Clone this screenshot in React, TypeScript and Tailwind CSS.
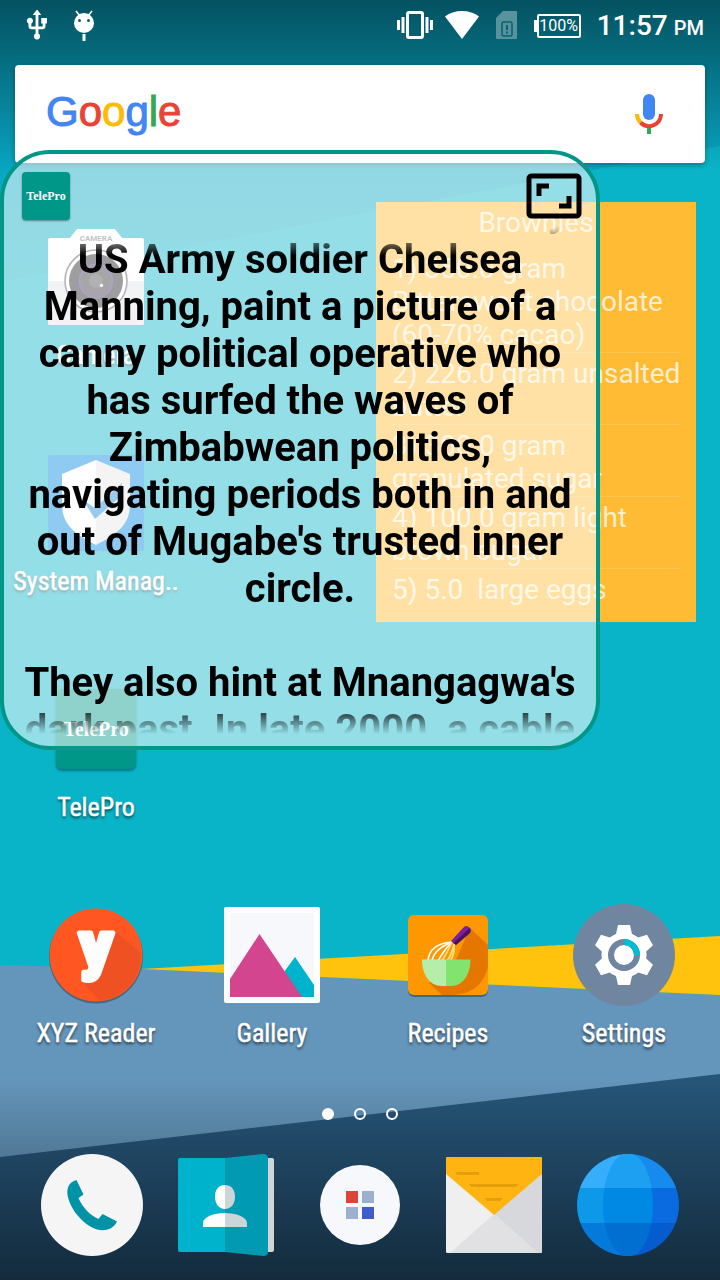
import type { ReactNode } from 'react';
import { MdAspectRatio, MdUsb } from 'react-icons/md';

function Wallpaper() {
  return (
    <svg className="absolute inset-0 h-full w-full" viewBox="0 0 720 1280" preserveAspectRatio="none" aria-hidden="true">
      <defs>
        <linearGradient id="topShade" x1="0" y1="0" x2="0" y2="1">
          <stop offset="0" stopColor="#000" stopOpacity="0.5" />
          <stop offset="0.3" stopColor="#000" stopOpacity="0.36" />
          <stop offset="1" stopColor="#000" stopOpacity="0" />
        </linearGradient>
        <linearGradient id="bottomShade" x1="0" y1="0" x2="0" y2="1">
          <stop offset="0" stopColor="#000" stopOpacity="0" />
          <stop offset="1" stopColor="#000" stopOpacity="0.5" />
        </linearGradient>
        <linearGradient id="ray" x1="0" y1="0" x2="0" y2="1">
          <stop offset="0.5" stopColor="#08a4c1" />
          <stop offset="1" stopColor="#0ab0c7" />
        </linearGradient>
      </defs>
      <rect width="720" height="1280" fill="#0ab4c8" />
      <polygon points="0,0 720,0 720,146 0,282" fill="url(#ray)" />
      <polygon points="0,965 141,969 720,995 720,1280 0,1280" fill="#6495ba" />
      <polygon points="141,969 720,936 720,995" fill="#ffc20d" />
      <polygon points="0,1157 720,1074 720,1280 0,1280" fill="#265578" />
      <rect width="720" height="172" fill="url(#topShade)" />
      <rect y="1080" width="720" height="200" fill="url(#bottomShade)" />
    </svg>
  );
}

function StatusBar() {
  return (
    <header className="relative flex h-[50px] items-center justify-between pl-5 pr-4 text-white">
      <div className="flex items-center gap-3">
        <MdUsb className="size-[34px]" aria-label="USB connected" />
        <svg className="size-9" viewBox="0 0 36 36" aria-label="Debugging">
          <circle cx="18" cy="16" r="10" fill="#fff" />
          <path d="M10 4l4 5M26 4l-4 5" stroke="#fff" strokeWidth="1.6" />
          <circle cx="13.500" cy="13.500" r="1.500" fill="#05606e" />
          <circle cx="22.500" cy="13.500" r="1.500" fill="#05606e" />
          <rect x="16.500" y="27" width="3" height="7" fill="#fff" />
        </svg>
      </div>
      <div className="flex items-center">
        <svg className="h-7 w-9" viewBox="0 0 36 28" fill="#fff" aria-label="Vibrate">
          <rect x="10.500" y="1.500" width="15" height="25" rx="1.500" fill="none" stroke="#fff" strokeWidth="3" />
          <path d="M0 9h3v10H0zM4.500 6h3v16h-3zM28.500 6h3v16h-3zM33 9h3v10h-3z" />
        </svg>
        <svg className="ml-3 h-7 w-[34px]" viewBox="0 0 34 28" aria-label="Wi-Fi">
          <path d="M0 5.500Q7 0 17 0t17 5.500L17 28z" fill="#fff" />
        </svg>
        <svg className="ml-[17px] h-7 w-[21px]" viewBox="0 0 21 28" aria-label="No SIM">
          <path d="M7 0h13q1 0 1 1v26q0 1-1 1H1q-1 0-1-1V7z" fill="#58939d" />
          <rect x="6" y="11" width="10" height="14" rx="1.500" fill="none" stroke="#05606e" strokeWidth="1.500" />
          <path d="M10 14h2v5h-2zM10 20.500h2v2h-2z" fill="#05606e" />
        </svg>
        <div className="ml-[17px] flex items-center pt-px">
          <span className="h-3 w-[3px] bg-white" />
          <span className="flex h-6 w-11 items-center justify-center rounded-xs border-2 border-white text-[16px] leading-5">100%</span>
        </div>
        <time className="ml-4 flex items-baseline gap-[6px] pt-1 text-[28px] font-medium leading-8">
          11:57 <span className="text-[20px]">PM</span>
        </time>
      </div>
    </header>
  );
}

function SearchBar() {
  return (
    <div className="relative mx-[15px] mt-[15px] flex h-[98px] items-center justify-between rounded-sm bg-white pl-[31px] pr-10 shadow-[0_2px_5px_rgba(0,0,0,0.3)]">
      <a href="#search" aria-label="Google" className="pb-1 font-['Liberation_Sans',sans-serif] text-[42px] leading-[50px] [-webkit-text-stroke:1px]">
        <span className="text-[#4285f4]">G</span>
        <span className="text-[#ea4335]">o</span>
        <span className="text-[#fbbc05]">o</span>
        <span className="text-[#4285f4]">g</span>
        <span className="text-[#34a853]">l</span>
        <span className="text-[#ea4335]">e</span>
      </a>
      <button aria-label="Voice search">
        <svg className="h-10 w-8" viewBox="0 0 32 40" fill="none" strokeWidth="4">
          <rect x="10" y="0" width="12" height="26" rx="6" fill="#4285f4" />
          <path d="M4 20a12 12 0 0 0 3.500 8.500" stroke="#fbbc05" />
          <path d="M7.500 28.500A12 12 0 0 0 28 20" stroke="#ea4335" />
          <path d="M16 34v6" stroke="#34a853" />
        </svg>
      </button>
    </div>
  );
}

function AppIcon({ label, area, children }: { label: string; area: string; children: ReactNode }) {
  return (
    <a href={'#' + label.toLowerCase().replace(/\W+/g, '-')} className={'flex flex-col items-center pt-[38px] ' + area}>
      <span className="flex h-[106px] items-center justify-center">{children}</span>
      <span className="mt-[9px] font-['Roboto_Condensed','Liberation_Sans_Narrow',Roboto,sans-serif] text-[26px] leading-8 text-white [-webkit-text-stroke:0.5px] [text-shadow:0_2px_3px_rgba(0,0,0,0.7)]">
        {label}
      </span>
    </a>
  );
}

function CameraArt() {
  return (
    <svg className="size-24" viewBox="0 0 96 96" aria-hidden="true">
      <path d="M2 9h20l7-9h38l7 9h20q2 0 2 2v83q0 2-2 2H2q-2 0-2-2V11q0-2 2-2z" fill="#fff" />
      <path d="M0 52h96v42q0 2-2 2H2q-2 0-2-2z" fill="#dfe4e9" />
      <circle cx="48" cy="52" r="31" fill="#fff" stroke="#555" strokeWidth="1.600" />
      <circle cx="48" cy="52" r="27" fill="#222229" />
      <circle cx="48" cy="52" r="16.500" fill="#34343c" stroke="#4c2a8e" strokeWidth="1.500" />
      <circle cx="48" cy="52" r="7" fill="#4d4d55" />
      <circle cx="53.500" cy="56.500" r="1.700" fill="#fff" />
      <text x="48" y="12" textAnchor="middle" fontSize="8" fontFamily="Roboto, sans-serif" fontWeight="700" fill="#777">CAMERA</text>
    </svg>
  );
}

function ShieldArt() {
  return (
    <svg className="size-24" viewBox="0 0 96 96" aria-hidden="true">
      <rect width="96" height="96" rx="2" fill="#0086e1" />
      <path d="M48 5L14 19v30c0 21 13 30 34 41z" fill="#fff" />
      <path d="M48 5l34 14v30c0 21-13 30-34 41z" fill="#e5e5e5" />
      <path d="M35 45l12 8 27-25-1 13-26 23z" fill="#1687d8" />
    </svg>
  );
}

function TeleProArt() {
  return (
    <span className="flex size-20 items-center justify-center rounded-md bg-[#009688] font-['Liberation_Serif',serif] text-[20px] font-bold text-white shadow-[0_2px_3px_rgba(0,0,0,0.35)]">
      TelePro
    </span>
  );
}

function ReaderArt() {
  return (
    <svg className="size-[100px]" viewBox="0 0 100 100" aria-hidden="true">
      <circle cx="50" cy="51.500" r="47" fill="#000" opacity="0.3" />
      <circle cx="50" cy="50" r="46.500" fill="#ff5622" />
      <path d="M70 27l25 21A46.500 46.500 0 0 1 54 96L35 76z" fill="#ef5122" />
      <text x="50" y="62" textAnchor="middle" fontSize="64" fontFamily="Roboto, sans-serif" fontWeight="900" fill="#fff" stroke="#fff" strokeWidth="5" strokeLinejoin="round">y</text>
    </svg>
  );
}

function GalleryArt() {
  return (
    <svg className="size-24" viewBox="0 0 96 96" aria-hidden="true">
      <rect width="96" height="96" rx="2" fill="#fff" />
      <rect x="6" y="6" width="84" height="84" fill="#f6f8fb" />
      <path d="M71 50l19 28v12H60V65z" fill="#00b3cc" />
      <path d="M35.500 27L78 90H6V72z" fill="#d4458f" />
    </svg>
  );
}

function RecipesArt() {
  return (
    <svg className="size-[86px]" viewBox="0 0 86 86" aria-hidden="true">
      <rect x="3" y="4" width="80" height="81" rx="6" fill="#000" opacity="0.3" />
      <rect x="3" y="3" width="80" height="80" rx="6" fill="#ff9800" />
      <path d="M65 16l18 17v22c-4 16-15 28-37 28h-9L24 71 50 50z" fill="#e57600" />
      <g fill="none" strokeWidth="1.700">
        <path d="M47 30Q24 32 23 49M47 30Q29 37 27 49M47 30Q39 38 33 49" stroke="#fff" />
        <path d="M47 30Q42 41 37 49M49 32Q47 42 42 49M49 32Q50 42 45 49" stroke="#ffe082" />
      </g>
      <path d="M46 29L58 16q3-4 7 0 1 2-1 4L51 33z" fill="#7b1fa2" />
      <path d="M48.500 31L65 16q2 3-1 6L51 33z" fill="#4a1060" />
      <path d="M17 47.500h24V74h-4C24 74 17 62 17 47.500z" fill="#b5eeab" />
      <path d="M41 47.500h24.500C65.500 62 58 74 46 74h-5z" fill="#83e36f" />
    </svg>
  );
}

function SettingsArt() {
  return (
    <svg className="size-[102px]" viewBox="-51 -51 102 102" aria-hidden="true">
      <circle r="51" fill="#7086a0" />
      <g fill="#fff">
        {[0, 60, 120, 180, 240, 300].map((a) => (
          <path key={a} d="M-6-30H6L8-21 12-16H-12L-8-21z" transform={`rotate(${a})`} />
        ))}
        <circle r="22.500" />
      </g>
      <circle r="13" fill="none" stroke="#7086a0" strokeWidth="6" />
      <path d="M0-13A13 13 0 0 1 13 0" fill="none" stroke="#00bcd4" strokeWidth="6" />
    </svg>
  );
}

const ingredients = [
  ['1) 350.0 gram', 'Bittersweet chocolate', '(60-70% cacao)'],
  ['2) 226.0 gram unsalted', 'butter'],
  ['3) 300.0 gram', 'granulated sugar'],
  ['4) 100.0 gram light', 'brown sugar'],
  ['5) 5.0  large eggs'],
];

function RecipeWidget() {
  return (
    <section className="col-span-2 col-start-3 row-span-2 row-start-1 m-4 overflow-hidden bg-[#ffbb33] px-4 pt-1 text-[28px] leading-[33px] text-white/75">
      <h2 className="text-center">Brownies</h2>
      <ul className="mt-[9px]">
        {ingredients.map((lines) => (
          <li key={lines[0]} className="border-b border-white/15 pb-px pt-1 last:border-0">
            {lines.map((line) => (
              <span key={line} className="block whitespace-pre">{line}</span>
            ))}
          </li>
        ))}
      </ul>
    </section>
  );
}

const story = [
  'US Army soldier Chelsea',
  'Manning, paint a picture of a',
  'canny political operative who',
  'has surfed the waves of',
  'Zimbabwean politics,',
  'navigating periods both in and',
  "out of Mugabe's trusted inner",
  'circle.',
  '\u00a0',
  "They also hint at Mnangagwa's",
  'dark past. In late 2000, a cable',
];

function Teleprompter() {
  return (
    <section className="absolute left-0 top-[150px] flex h-[600px] w-[600px] max-w-full flex-col rounded-[50px] border-4 border-[#009688] bg-white/56">
      <div className="flex items-center justify-between pl-[18px] pr-3 pt-3">
        <button className="size-12 rounded-sm bg-[#009688] font-['Liberation_Serif',serif] text-[12px] font-bold text-white shadow-[0_1px_2px_rgba(0,0,0,0.4)]">
          TelePro
        </button>
        <button aria-label="Resize">
          <MdAspectRatio className="size-[60px] text-black" />
        </button>
      </div>
      <div className="mb-3 min-h-0 flex-1 overflow-hidden [mask-image:linear-gradient(transparent,#000_30px,#000_calc(100%_-_30px),transparent)]">
        <div className="-mt-[37px] text-center text-[40px] font-bold leading-[47px] text-black">
          <p className="pr-7 text-right">y</p>
          {story.map((line) => (
            <p key={line} className="whitespace-nowrap">{line}</p>
          ))}
        </div>
      </div>
    </section>
  );
}

function Dock() {
  return (
    <nav className="relative grid h-[142px] grid-cols-5 items-center justify-items-center px-[25px] pb-2">
      <a href="#phone" aria-label="Phone">
        <svg className="size-[102px]" viewBox="0 0 102 102">
          <circle cx="51" cy="51" r="51" fill="#f5f5f5" />
          <path d="M35.500 26l7 14.500-5 3.500c3 8 12 18 20 21l4-5L76 67.500c-4 8-12 10-20 8C42 71 29 55 26.500 41c-1-8 2-13 9-15z" fill="#0092a6" />
        </svg>
      </a>
      <a href="#contacts" aria-label="Contacts">
        <svg className="h-[102px] w-24" viewBox="0 0 96 102">
          <rect x="70" y="4" width="26" height="94" rx="2" fill="#d4d4d4" />
          <path d="M2 4h45v94H2q-2 0-2-2V6q0-2 2-2z" fill="#00b3cc" />
          <path d="M47 4l38-4q5 0 5 4v94q0 4-5 4l-38-4z" fill="#009bb3" />
          <path d="M47 31c-7 0-10 5-10 12s4 12 10 12zM47 59c-11 0-22 4-22 10v4h22z" fill="#fff" />
          <path d="M47 31c7 0 10 5 10 12s-4 12-10 12zM47 59c11 0 22 4 22 10v4H47z" fill="#ccd5d8" />
        </svg>
      </a>
      <button aria-label="All apps" className="grid size-20 grid-cols-[12px_12px] place-content-center gap-1 rounded-full bg-[#f7f8fb]">
        <span className="size-3 bg-[#dc4538]" />
        <span className="size-3 bg-[#9cb0cd]" />
        <span className="size-3 bg-[#9cb0cd]" />
        <span className="size-3 bg-[#405bca]" />
      </button>
      <a href="#mail" aria-label="Mail">
        <svg className="size-24" viewBox="0 0 96 96">
          <rect width="96" height="96" rx="1.500" fill="#efefef" />
          <path d="M48 57l48-40v78q0 1-1 1h-3z" fill="#d7d8dc" />
          <path d="M48 57l44 39H4z" fill="#e1e1e3" />
          <path d="M1 0h94q1 0 1 1v16L48 58 0 17V1q0-1 1-1z" fill="#ffb411" />
          <path d="M9 15h24v3H11zM22.500 27h50L70 30H25.500zM38.500 41h18.500L54 44H41z" fill="#e59f0b" />
        </svg>
      </a>
      <a href="#browser" aria-label="Browser">
        <svg className="size-[102px]" viewBox="0 0 102 102">
          <defs>
            <clipPath id="globe"><circle cx="51" cy="51" r="51" /></clipPath>
            <clipPath id="meridian"><ellipse cx="51" cy="51" rx="25" ry="52" /></clipPath>
          </defs>
          <g clipPath="url(#globe)">
            <path d="M0 0h51v34H0z" fill="#35aefb" />
            <path d="M51 0h51v34H51z" fill="#168aed" />
            <path d="M0 34h51v35H0z" fill="#0e98e8" />
            <path d="M51 34h51v35H51z" fill="#0a6be0" />
            <path d="M0 69h51v33H0z" fill="#047adb" />
            <path d="M51 69h51v33H51z" fill="#045ccf" />
            <g clipPath="url(#meridian)">
              <path d="M0 0h102v34H0z" fill="#1d9ff2" />
              <path d="M0 34h102v35H0z" fill="#0088e5" />
              <path d="M0 69h102v33H0z" fill="#006fd2" />
            </g>
          </g>
        </svg>
      </a>
    </nav>
  );
}

export default function App() {
  return (
    <div className="relative flex min-h-screen w-full flex-col overflow-hidden font-['Roboto',sans-serif]">
      <Wallpaper />
      <StatusBar />
      <SearchBar />
      <main className="relative mt-[23px] grid auto-rows-[226px] grid-cols-4 px-2">
        <AppIcon label="Camera" area="col-start-1 row-start-1"><CameraArt /></AppIcon>
        <AppIcon label="System Manag.." area="col-start-1 row-start-2"><ShieldArt /></AppIcon>
        <RecipeWidget />
        <AppIcon label="TelePro" area="col-start-1 row-start-3"><TeleProArt /></AppIcon>
        <AppIcon label="XYZ Reader" area="col-start-1 row-start-4"><ReaderArt /></AppIcon>
        <AppIcon label="Gallery" area="col-start-2 row-start-4"><GalleryArt /></AppIcon>
        <AppIcon label="Recipes" area="col-start-3 row-start-4"><RecipesArt /></AppIcon>
        <AppIcon label="Settings" area="col-start-4 row-start-4"><SettingsArt /></AppIcon>
      </main>
      <div className="relative flex h-12 items-center justify-center gap-5">
        <span className="size-3 rounded-full bg-white" />
        <span className="size-3 rounded-full border-2 border-white" />
        <span className="size-3 rounded-full border-2 border-white" />
      </div>
      <Dock />
      <Teleprompter />
    </div>
  );
}
